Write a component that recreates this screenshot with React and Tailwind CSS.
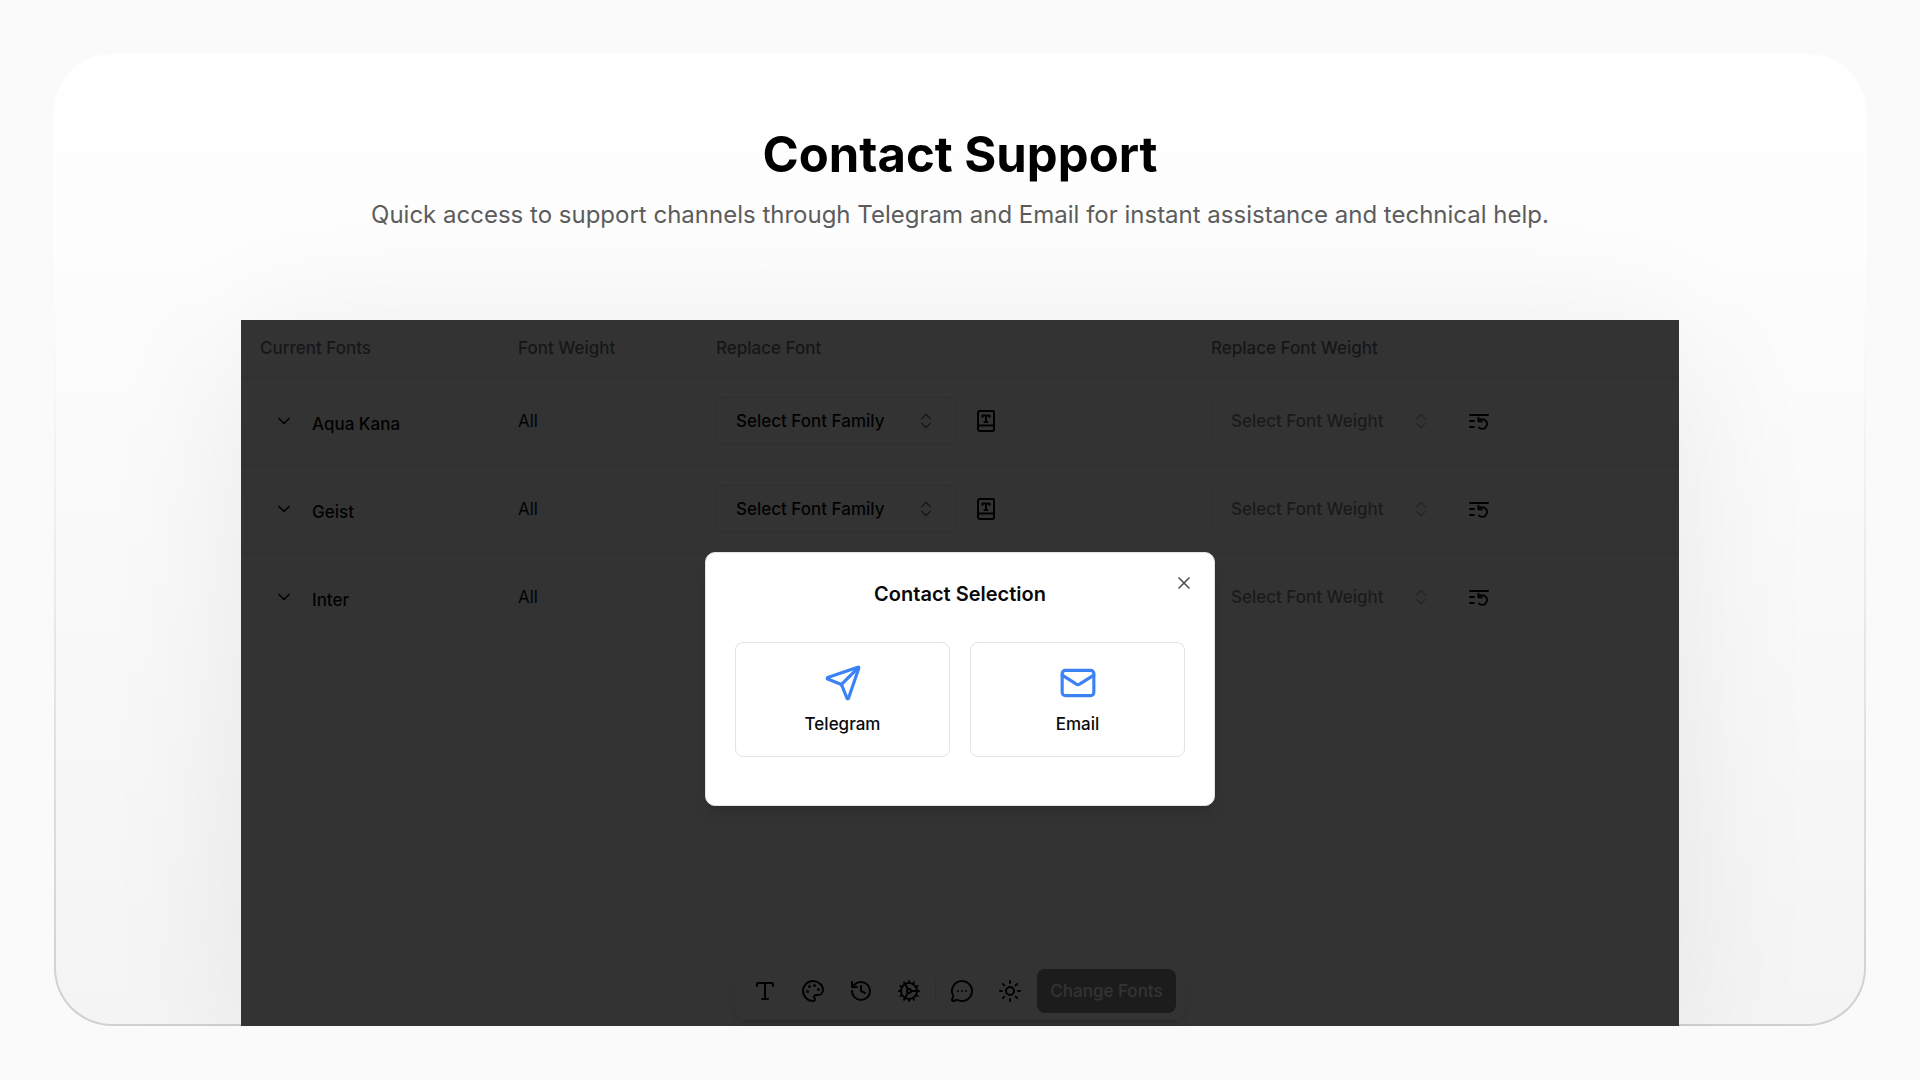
import React from 'react';
import {
  ChevronDown,
  ChevronsUpDown,
  Cog,
  History,
  Mail,
  MessageCircleMore,
  Palette,
  Send,
  Sun,
  Type,
  X
} from 'lucide-react';

const fonts = ['Aqua Kana', 'Geist', 'Inter'];

const tools = [
  { label: 'Fonts', icon: Type },
  { label: 'Colors', icon: Palette },
  { label: 'History', icon: History },
  { label: 'Settings', icon: Cog }
];

const extraTools = [
  { label: 'Contact support', icon: MessageCircleMore },
  { label: 'Toggle theme', icon: Sun }
];

const contacts = [
  { label: 'Telegram', icon: Send },
  { label: 'Email', icon: Mail }
];

function FontBookIcon() {
  return (
    <svg width="24" height="24" viewBox="0 0 24 24" fill="none" stroke="currentColor" strokeWidth="2" strokeLinecap="round" strokeLinejoin="round">
      <path d="M4 20V4a2 2 0 0 1 2-2h13a1 1 0 0 1 1 1v18a1 1 0 0 1-1 1H6a2 2 0 0 1-2-2Z" />
      <path d="M4 18.500a2 2 0 0 1 2-2h14" />
      <path d="M8.500 8V6.500h7V8M12 6.500V13M10.500 13h3" />
    </svg>
  );
}

function ResetListIcon() {
  return (
    <svg width="24" height="24" viewBox="0 0 24 24" fill="none" stroke="currentColor" strokeWidth="2" strokeLinecap="round" strokeLinejoin="round">
      <path d="M3 6h18M3 12h4M3 18h4" />
      <path d="M12 18.500a4.800 4.800 0 1 0 .5-7.500L11.500 12" />
      <path d="M11.500 8.800v3.400h3.400" />
    </svg>
  );
}

function SelectButton({ children, disabled }) {
  return (
    <button
      type="button"
      disabled={disabled}
      className="flex h-12 w-60 items-center justify-between rounded-lg border border-[#e4e4e7] px-[19px] disabled:opacity-50"
    >
      {children}
      <ChevronsUpDown size={20} className="opacity-50" />
    </button>
  );
}

function ToolButton({ label, icon: Icon }) {
  return (
    <button type="button" aria-label={label} className="flex size-12 items-center justify-center">
      <Icon size={24} />
    </button>
  );
}

function FontTable() {
  return (
    <table className="w-full table-fixed border-collapse text-left">
      <thead>
        <tr className="h-[57px] border-b border-[#e4e4e7] text-[#71717a]">
          <th className="w-[257px] px-[19px] font-medium">Current Fonts</th>
          <th className="w-[198px] px-5 font-medium">Font Weight</th>
          <th className="w-[495px] px-5 font-medium">Replace Font</th>
          <th className="px-5 font-medium">Replace Font Weight</th>
        </tr>
      </thead>
      <tbody>
        {fonts.map((font) => (
          <tr key={font} className="h-[88px] border-b border-[#e4e4e7] last:border-0">
            <td className="px-[19px]">
              <div className="flex items-center gap-1">
                <button type="button" aria-label={`Expand ${font}`} className="flex size-12 items-center justify-center">
                  <ChevronDown size={20} />
                </button>
                <span className="pt-[6px]">{font}</span>
              </div>
            </td>
            <td className="px-5 font-normal">All</td>
            <td className="px-5">
              <div className="flex items-center gap-[18px]">
                <SelectButton>Select Font Family</SelectButton>
                <button type="button" aria-label="Apply font family">
                  <FontBookIcon />
                </button>
              </div>
            </td>
            <td className="px-5">
              <div className="flex items-center gap-4">
                <SelectButton disabled>Select Font Weight</SelectButton>
                <button type="button" aria-label="Reset font weight">
                  <ResetListIcon />
                </button>
              </div>
            </td>
          </tr>
        ))}
      </tbody>
    </table>
  );
}

function Toolbar() {
  return (
    <div className="mx-auto mt-auto mb-[6px] flex items-center rounded-xl border border-[#f4f4f5] py-1 pr-[9px] pl-[6px] shadow-lg">
      {tools.map((tool) => (
        <ToolButton key={tool.label} {...tool} />
      ))}
      <div className="mx-[2px] h-6 w-px bg-[#e4e4e7]" />
      {extraTools.map((tool) => (
        <ToolButton key={tool.label} {...tool} />
      ))}
      <button type="button" disabled className="ml-[3px] h-11 rounded-lg bg-[#18181b] px-[13px] text-[#fafafa] opacity-50">
        Change Fonts
      </button>
    </div>
  );
}

function ContactDialog() {
  return (
    <div
      role="dialog"
      aria-labelledby="contact-title"
      className="absolute top-[232px] left-1/2 w-[510px] -translate-x-1/2 rounded-[10px] border border-[#e4e4e7] bg-white px-[29px] pt-[27px] pb-12 shadow-lg"
    >
      <h2 id="contact-title" className="text-center text-xl leading-7 font-semibold">
        Contact Selection
      </h2>
      <button type="button" aria-label="Close" className="absolute top-5 right-5 opacity-70">
        <X size={20} />
      </button>
      <div className="mt-[34px] grid grid-cols-2 gap-5">
        {contacts.map(({ label, icon: Icon }) => (
          <button
            key={label}
            type="button"
            className="flex h-[115px] flex-col items-center gap-[10px] rounded-lg border border-[#e4e4e7] pt-[21px]"
          >
            <Icon size={38} className="text-[#3b82f6]" />
            {label}
          </button>
        ))}
      </div>
    </div>
  );
}

export default function App() {
  return (
    <div className="flex min-h-screen flex-col bg-[#fafafa] p-[54px] font-['Inter',sans-serif]">
      <div className="flex flex-1 flex-col overflow-hidden rounded-[58px] bg-linear-to-b from-white from-20% to-[#d0d0d0] px-[2px] pt-[2px]">
        <main className="mb-[2px] flex flex-1 flex-col rounded-[56px] bg-linear-to-b from-white to-[#f4f4f4]">
          <header className="pt-[67px] text-center">
            <h1 className="text-[49px] leading-[64px] font-bold text-black">Contact Support</h1>
            <p className="mt-[10px] text-2xl leading-9 text-[#5c5c5c]">
              Quick access to support channels through Telegram and Email for instant assistance and technical help.
            </p>
          </header>

          <section className="relative mx-[185px] mt-[87px] -mb-[2px] flex flex-1 flex-col bg-white text-[17px] leading-6 font-medium text-[#09090b] shadow-[0_20px_140px_rgba(0,0,0,0.07)]">
            <FontTable />
            <Toolbar />
            <div className="absolute inset-0 bg-black/80" />
            <ContactDialog />
          </section>
        </main>
      </div>
    </div>
  );
}
